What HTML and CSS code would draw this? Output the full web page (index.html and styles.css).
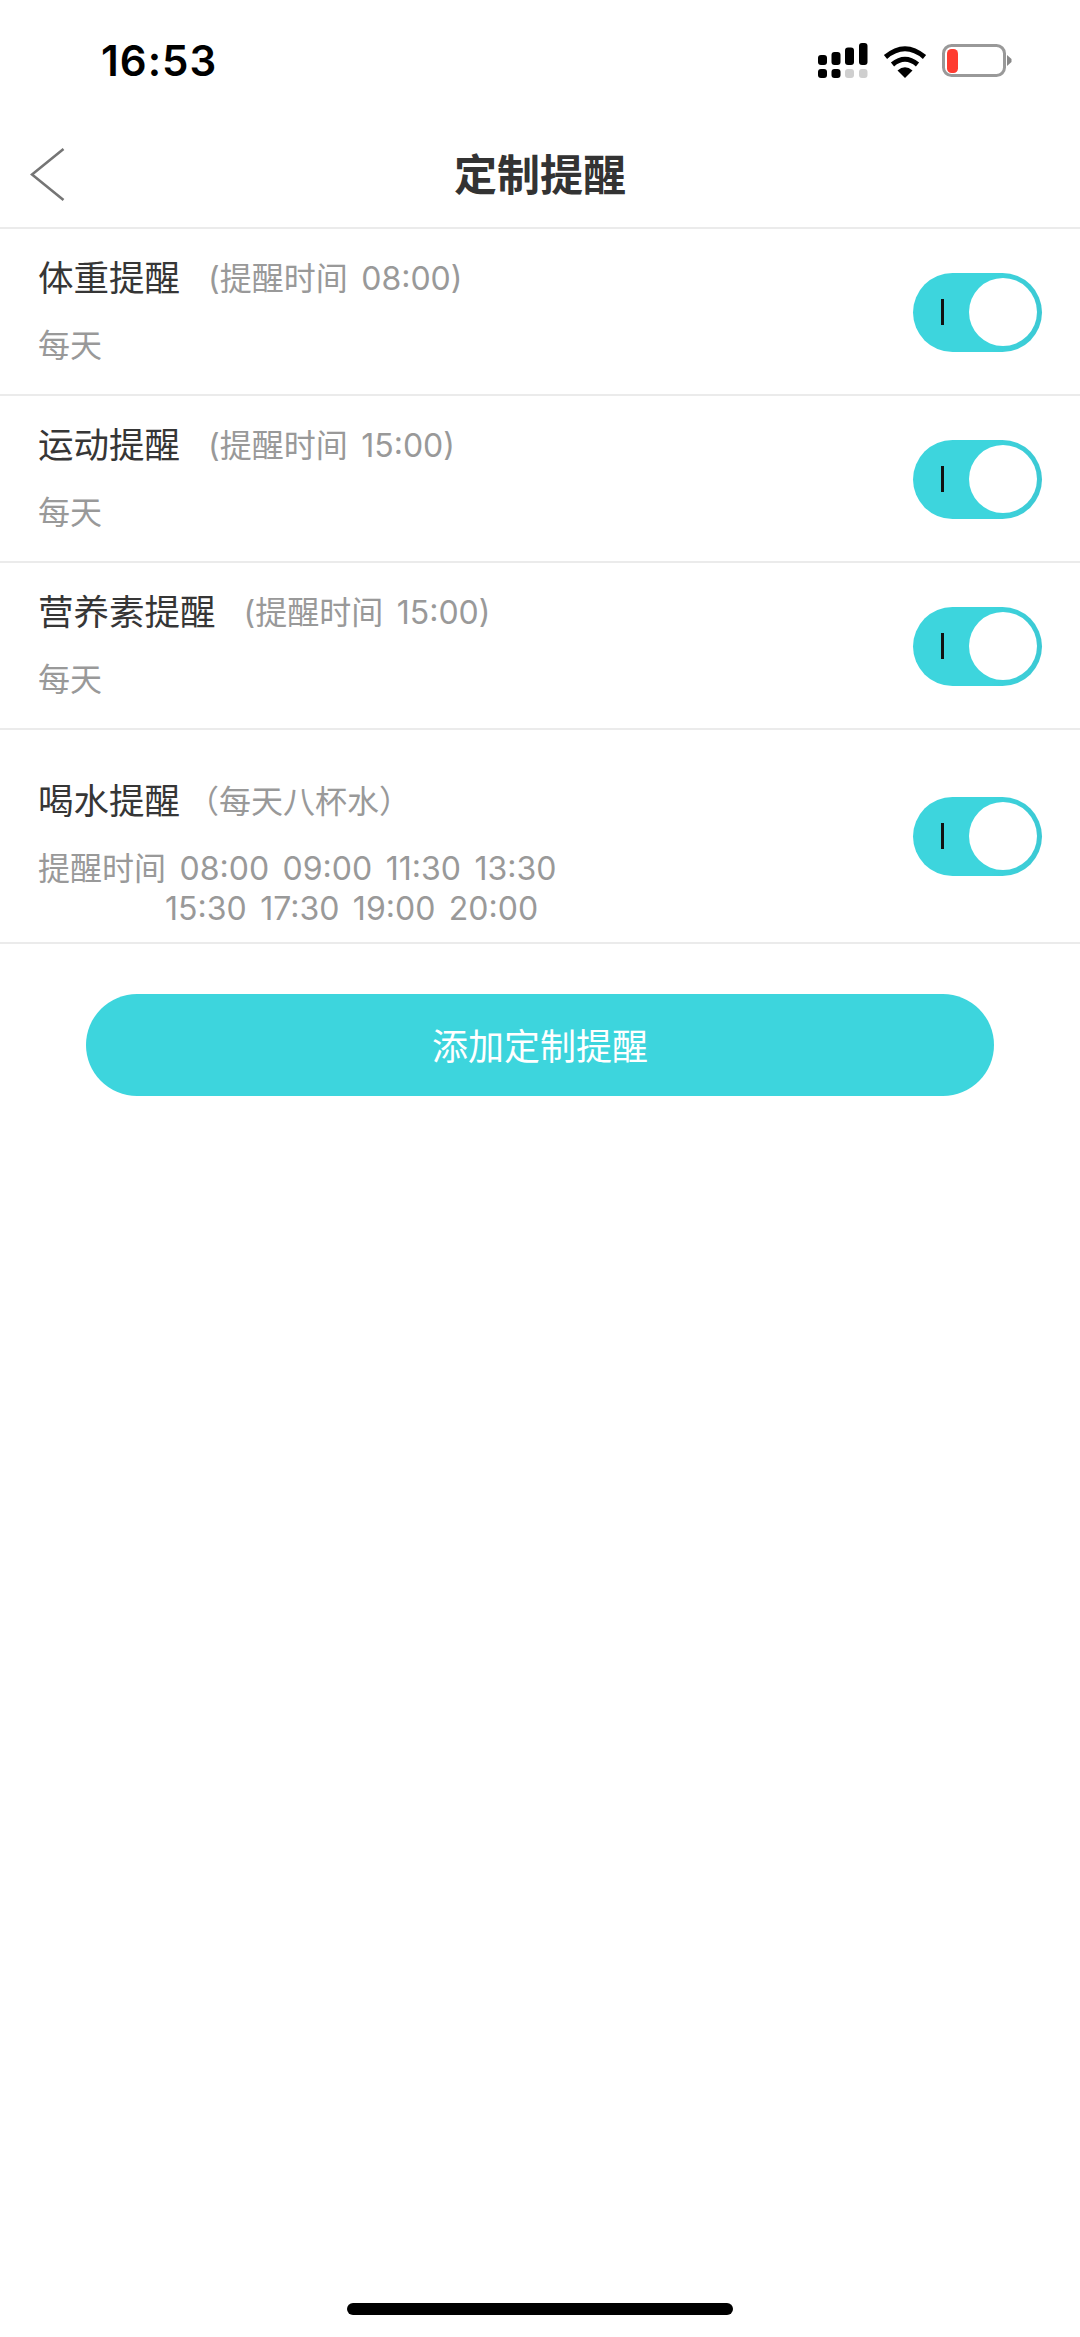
FILE: index.html
```html
<!DOCTYPE html>
<html lang="zh">
<head>
<meta charset="utf-8">
<title>定制提醒</title>
<link rel="stylesheet" href="styles.css">
</head>
<body>
<div class="page">
  <header class="status">
    <span class="clock">16:53</span>
    <div class="status-icons">
      <svg class="signal" width="52" height="36" viewBox="0 0 52 36">
        <g fill="#000">
          <rect x="0" y="12" width="9" height="10" rx="3"/>
          <rect x="13.500" y="9" width="9" height="13" rx="3"/>
          <rect x="27" y="4.500" width="9" height="17.500" rx="3"/>
          <rect x="41" y="0" width="8.500" height="22" rx="3"/>
          <rect x="0" y="26" width="9" height="9" rx="3"/>
          <rect x="13.500" y="26" width="9" height="9" rx="3"/>
        </g>
        <g fill="#cfcfcf">
          <rect x="27" y="26" width="9" height="9" rx="3"/>
          <rect x="41" y="26" width="8.500" height="9" rx="3"/>
        </g>
      </svg>
      <svg class="wifi" width="44" height="34" viewBox="0 0 44 34">
        <path d="M22 33 L14.500 25.500 Q22 19 29.500 25.500 Z" fill="#000"/>
        <path d="M9.500 19.500 Q22 9 34.500 19.500" fill="none" stroke="#000" stroke-width="5"/>
        <path d="M2.500 12 Q22 -4.500 41.500 12" fill="none" stroke="#000" stroke-width="5"/>
      </svg>
      <svg class="battery" width="70" height="34" viewBox="0 0 70 34">
        <rect x="1.500" y="1.500" width="61" height="30" rx="8" fill="#fff" stroke="#999" stroke-width="3"/>
        <rect x="5" y="5" width="11" height="24" rx="4.500" fill="#ff3b30"/>
        <path d="M65 11 L69.500 15 V18 L65 22 Z" fill="#888"/>
      </svg>
    </div>
  </header>

  <nav class="navbar">
    <svg class="back" width="36" height="56" viewBox="0 0 36 56">
      <path d="M33.500 2 L2 27.500 L33.500 53" fill="none" stroke="#757575" stroke-width="2.600"/>
    </svg>
    <h1 class="title">定制提醒</h1>
  </nav>

  <ul class="list">
    <li class="row">
      <div class="row-text">
        <div class="row-head"><span class="name">体重提醒</span><span class="note">(提醒时间 08:00)</span></div>
        <div class="detail">每天</div>
      </div>
      <div class="toggle"><span class="toggle-mark"></span><span class="toggle-knob"></span></div>
    </li>
    <li class="row">
      <div class="row-text">
        <div class="row-head"><span class="name">运动提醒</span><span class="note">(提醒时间 15:00)</span></div>
        <div class="detail">每天</div>
      </div>
      <div class="toggle"><span class="toggle-mark"></span><span class="toggle-knob"></span></div>
    </li>
    <li class="row">
      <div class="row-text">
        <div class="row-head"><span class="name">营养素提醒</span><span class="note">(提醒时间 15:00)</span></div>
        <div class="detail">每天</div>
      </div>
      <div class="toggle"><span class="toggle-mark"></span><span class="toggle-knob"></span></div>
    </li>
    <li class="row row-water">
      <div class="row-text">
        <div class="row-head"><span class="name">喝水提醒</span><span class="note note-wide">（每天八杯水）</span></div>
        <div class="detail">提醒时间 08:00 09:00 11:30 13:30</div>
        <div class="detail detail-more">15:30 17:30 19:00 20:00</div>
      </div>
      <div class="toggle"><span class="toggle-mark"></span><span class="toggle-knob"></span></div>
    </li>
  </ul>

  <div class="action">
    <button class="add-btn" type="button">添加定制提醒</button>
  </div>

  <div class="spacer"></div>
  <div class="home-wrap"><div class="home"></div></div>
</div>
</body>
</html>
```

FILE: styles.css
```css
* { box-sizing: border-box; }
html, body { margin: 0; padding: 0; background: #fff; }
body {
  width: 1080px;
  height: 2337px;
  font-family: Inter, "Noto Sans CJK SC", sans-serif;
  overflow: hidden;
}
.page { display: flex; flex-direction: column; height: 2337px; }

.status {
  height: 120px;
  display: flex;
  align-items: flex-start;
  justify-content: space-between;
  padding: 36px 68px 0 101px;
}
.clock { font-size: 42px; line-height: 50px; font-weight: 600; color: #000; letter-spacing: 1px; }
.status-icons { display: flex; align-items: flex-start; gap: 15px; padding-top: 7px; }
.signal { display: block; margin-right: -2px; }
.wifi { display: block; margin-top: 2px; }
.battery { display: block; margin-top: 1px; }

.navbar {
  height: 109px;
  padding-top: 3px;
  display: flex;
  align-items: center;
  justify-content: center;
  position: relative;
  border-bottom: 2px solid #ebebeb;
}
.back { position: absolute; left: 30px; top: 27px; }
.title { margin: 0; font-size: 43px; line-height: 50px; font-weight: 700; color: #333; }

.list { list-style: none; margin: 0; padding: 0; }
.row {
  height: 167px;
  display: flex;
  align-items: center;
  justify-content: space-between;
  padding: 0 38px 0 38px;
  border-bottom: 2px solid #ebebeb;
}
.row-water { height: 214px; }
.row-text { display: flex; flex-direction: column; align-self: flex-start; margin-top: 26px; }
.row-water .row-text { margin-top: 48px; }
.row-head { display: flex; align-items: center; height: 48px; }
.name { font-size: 35.500px; line-height: 48px; color: #363636; }
.note { font-size: 32px; line-height: 48px; color: #999; margin-left: 28px; word-spacing: 4.500px; }
.note-wide { margin-left: 7px; }
.detail { font-size: 32px; line-height: 40px; color: #999; margin-top: 23px; word-spacing: 4.500px; }
.detail-more { margin-top: 0; padding-left: 127px; }

.toggle {
  width: 129px;
  height: 79px;
  border-radius: 40px;
  background: linear-gradient(90deg, #3dd5dd 0%, #3dd5dd 60%, #3cc9d4 100%);
  display: flex;
  align-items: center;
  justify-content: space-between;
  padding: 0 5px 0 28px;
  flex: none;
  margin-top: 1px;
}
.row-water .toggle { margin-top: 0; }
.toggle-mark { width: 3px; height: 26px; background: #111; display: block; }
.toggle-knob { width: 68px; height: 68px; border-radius: 50%; background: #fff; display: block; }

.action { padding: 50px 86px 0; }
.add-btn {
  display: block;
  width: 100%;
  height: 102px;
  border: 0;
  border-radius: 51px;
  background: #3dd5dd;
  color: #fff;
  font: 400 36px/48px "Noto Sans CJK SC", sans-serif;
  padding: 0 0 3px;
}

.spacer { flex: 1; }
.home-wrap { display: flex; justify-content: center; padding-bottom: 22px; }
.home { width: 386px; height: 12px; border-radius: 6px; background: #000; }
```
